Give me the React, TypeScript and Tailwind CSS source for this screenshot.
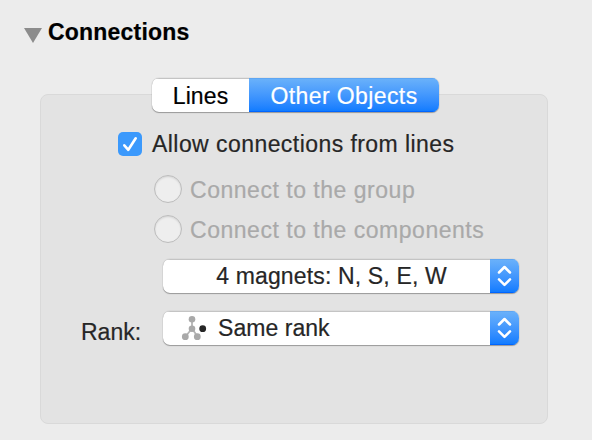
import React from "react";

function Stepper() {
  return (
    <div className="flex h-full w-[29px] items-center justify-center bg-linear-to-b from-[#6bb2fa] to-[#0a7aff] shadow-[inset_0_1px_0_#5ea6f3,inset_0_-1px_0_#0065ff]">
      <svg width="29" height="34" viewBox="0 0 29 34" fill="none" stroke="#fff" strokeWidth="2.5" strokeLinecap="round" strokeLinejoin="round">
        <path d="M9 13.500 14.500 8l5.500 5.500M9 20.400l5.500 5.500 5.500-5.500" />
      </svg>
    </div>
  );
}

function PopUp({ children }: { children: React.ReactNode }) {
  return (
    <button className="flex h-[34px] w-[356px] overflow-hidden rounded-[7px] bg-white shadow-[0_1px_1px_rgba(0,0,0,0.3),0_0_1px_rgba(0,0,0,0.35)]">
      <span className="flex h-full flex-1 items-center shadow-[inset_0_1px_0_#c4c4c4]">{children}</span>
      <Stepper />
    </button>
  );
}

function RankIcon() {
  return (
    <svg width="26" height="26" viewBox="0 0 26 26">
      <path d="M11 4v9.500L4.500 21.500M11 13.500l5.500 8" fill="none" stroke="#b4b4b4" strokeWidth="1.8" />
      <g fill="#a9a9a9">
        <circle cx="11" cy="4.300" r="3.300" />
        <circle cx="11" cy="13.700" r="3.300" />
        <circle cx="4.300" cy="21.700" r="3.400" />
        <circle cx="16.300" cy="21.700" r="3.400" />
      </g>
      <circle cx="21.700" cy="13.700" r="3.400" fill="#262626" />
    </svg>
  );
}

function Radio({ label }: { label: string }) {
  return (
    <div className="flex h-10 items-center text-[#a9a9a9]">
      <span className="size-7 rounded-full border border-[#bcbcbc] bg-[#eeeeee] shadow-[inset_0_1px_2px_rgba(0,0,0,0.12)]" />
      <span className="ml-2 whitespace-nowrap pt-px tracking-[0.52px]">{label}</span>
    </div>
  );
}

export default function App() {
  return (
    <main className="h-[440px] w-[592px] overflow-hidden bg-[#ececec] font-['Liberation_Sans',Arial,sans-serif] text-[23px] leading-[28px] text-[#262626] [-webkit-text-stroke:0.2px]">
      <header className="flex h-[94px] pl-6 pt-[18px] text-black">
        <svg className="mt-[10px]" width="18" height="15" viewBox="0 0 18 15">
          <path d="M0 0h18L9 15Z" fill="#8c8c8c" />
        </svg>
        <h1 className="ml-[6px] font-bold tracking-[0.2px]">Connections</h1>
      </header>
      <section className="ml-10 h-[330px] w-[508px] rounded-[8px] border border-[#d9d9d9] bg-[#e3e3e3]">
        <div className="-mt-[17px] ml-[111px] flex h-[34px] w-[287px] overflow-hidden rounded-[7px] bg-white shadow-[0_1px_1px_rgba(0,0,0,0.3),0_0_1px_rgba(0,0,0,0.35)]">
          <button className="flex w-[97px] items-center justify-center pt-[2px] tracking-[0.1px] text-black shadow-[inset_0_1px_0_#c4c4c4]">Lines</button>
          <button className="flex flex-1 items-center justify-center bg-linear-to-b from-[#6bb2fa] to-[#0a7aff] pt-[2px] tracking-[0.4px] text-white shadow-[inset_0_1px_0_#5ea6f3,inset_0_-1px_0_#0065ff]">Other Objects</button>
        </div>
        <div className="ml-[77px] mt-[18px] flex h-7 items-center">
          <span className="flex size-6 items-center justify-center rounded-[5px] bg-[#3b99fc]">
            <svg width="24" height="24" viewBox="0 0 24 24" fill="none" stroke="#fff" strokeWidth="2.6" strokeLinecap="round" strokeLinejoin="round">
              <path d="m6.300 13.300 4 4.500L17.700 6.300" />
            </svg>
          </span>
          <span className="ml-[10px] whitespace-nowrap tracking-[0.44px]">Allow connections from lines</span>
        </div>
        <div className="ml-[113px] mt-[11px]">
          <Radio label="Connect to the group" />
          <Radio label="Connect to the components" />
        </div>
        <div className="ml-[122px] mt-[10px]">
          <PopUp>
            <span className="w-full pl-[10px] text-center tracking-[0.15px]">4 magnets: N, S, E, W</span>
          </PopUp>
        </div>
        <div className="mt-[18px] flex">
          <span className="w-[122px] pl-[40px] pt-[7px] tracking-[0px]">Rank:</span>
          <PopUp>
            <span className="ml-[18px]"><RankIcon /></span>
            <span className="ml-[11px] tracking-[0.05px]">Same rank</span>
          </PopUp>
        </div>
      </section>
    </main>
  );
}
